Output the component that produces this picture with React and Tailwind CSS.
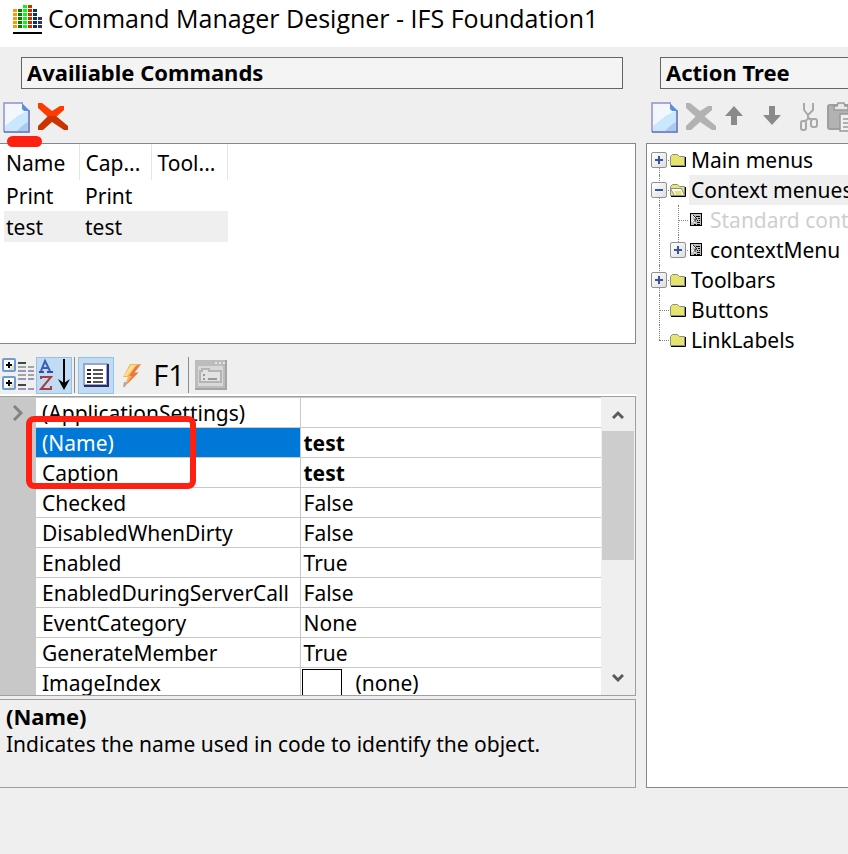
const PROPS = [
  ['(ApplicationSettings)', ''],
  ['(Name)', 'test'],
  ['Caption', 'test'],
  ['Checked', 'False'],
  ['DisabledWhenDirty', 'False'],
  ['Enabled', 'True'],
  ['EnabledDuringServerCall', 'False'],
  ['EventCategory', 'None'],
  ['GenerateMember', 'True'],
  ['ImageIndex', '(none)'],
];

const BARS = [
  ['#ff9900', 5],
  ['#008000', 5],
  ['#00ff00', 6],
  ['#cc3300', 6],
  ['#003366', 5],
  ['#333366', 3],
];

function Logo() {
  return (
    <svg width="29" height="30" viewBox="0 0 29 30" className="shrink-0" aria-hidden="true">
      {BARS.map(([color, n], i) =>
        Array.from({ length: n }, (_, j) => (
          <rect key={i + '-' + j} x={i * 5} y={21 - j * 4} width="4" height="3" fill={color} />
        ))
      )}
      <rect x="0" y="28" width="29" height="2" fill="#000" />
    </svg>
  );
}

function NewIcon() {
  return (
    <svg width="28" height="32" viewBox="0 0 28 32" aria-hidden="true">
      <path d="M1 1H20L26 8V30H1Z" fill="#f1f7fd" />
      <path d="M2 24L16 13L25 9V29H2Z" fill="#c9e7fd" />
      <path d="M14 29L19 24L25 20V29Z" fill="#a6cbf0" />
      <path d="M1 30V1H20" fill="none" stroke="#8f8fd0" strokeWidth="1.5" />
      <path d="M26 8V30H1" fill="none" stroke="#6464ae" strokeWidth="1.5" />
      <path d="M19 1L27 9H21L19 7Z" fill="#5a8fdb" />
    </svg>
  );
}

function CrossIcon({ top, bottom }) {
  return (
    <svg width="32" height="30" viewBox="0 0 32 30" aria-hidden="true">
      <path d="M1 1H5L15 9L23 4H27V8L19 15H11L1 6Z" fill={top} />
      <path d="M11 14H19L31 24V28H27L15 20L6 28H1V24Z" fill={bottom} />
    </svg>
  );
}

function ArrowIcon({ down }) {
  return (
    <svg width="18" height="19" viewBox="0 0 18 19" aria-hidden="true">
      <path d={down ? 'M6 0H12V9H18L9 19L0 9H6Z' : 'M9 0L18 10H12V19H6V10H0Z'} fill="#8a8a8a" />
    </svg>
  );
}

function CutIcon() {
  return (
    <svg width="20" height="30" viewBox="0 0 20 30" fill="none" stroke="#a8a8a8" strokeWidth="2" aria-hidden="true">
      <path d="M5 1V8L9 13V17L6 19M14 1V8L9 13M9 16L14 18" />
      <rect x="2" y="19" width="5" height="9" rx="2" />
      <rect x="12" y="17" width="6" height="8" rx="2" />
    </svg>
  );
}

function PasteIcon() {
  return (
    <svg width="28" height="30" viewBox="0 0 28 30" aria-hidden="true">
      <rect x="1" y="3" width="24" height="24" rx="2" fill="#b2b2b2" stroke="#9e9e9e" strokeWidth="2" />
      <path d="M7 8V4H10L11 1H17L18 4H21V8Z" fill="#e8e8e8" stroke="#999" strokeWidth="1.5" />
      <path d="M13 12H22L27 17V29H13Z" fill="#efefef" stroke="#999" strokeWidth="1.5" />
      <path d="M16 17H21M16 21H24M16 25H24" stroke="#999" strokeWidth="1.5" />
    </svg>
  );
}

function CategorizedIcon() {
  return (
    <svg width="32" height="34" viewBox="0 0 32 34" aria-hidden="true">
      {[1, 19].map((y) => (
        <g key={y}>
          <rect x="1" y={y} width="12" height="12" rx="1" fill="#fff" stroke="#6f9cd4" strokeWidth="2" />
          <path d={`M12 ${y + 5}V${y + 11}H6Z`} fill="#e4e0d0" />
          <path d={`M4 ${y + 6}H10M7 ${y + 3}V${y + 9}`} stroke="#000" strokeWidth="2" />
        </g>
      ))}
      <path d="M16 5H24M16 27H24" stroke="#444" strokeWidth="2" />
      {[9, 13, 17, 21, 31].map((y) => (
        <path key={y} d={`M16 ${y}H24M26 ${y}H32`} stroke={y % 8 === 1 ? '#9aa89f' : '#9c94bc'} strokeWidth="2" />
      ))}
    </svg>
  );
}

function SortIcon() {
  return (
    <svg width="32" height="34" viewBox="0 0 32 34" fill="none" aria-hidden="true">
      <path d="M3 13L7 3L12 13M5 10H10" stroke="#3c5cb8" strokeWidth="2" />
      <path d="M1 14H6M9 14H15" stroke="#3c4c9c" strokeWidth="2" />
      <path d="M3 21V19H13L3 31H13V28" stroke="#a83c3c" strokeWidth="2" />
      <path d="M26 1V29" stroke="#000" strokeWidth="2" />
      <path d="M20 21L26 32L32 21L26 25Z" fill="#000" />
    </svg>
  );
}

function PropertiesIcon() {
  return (
    <svg width="26" height="24" viewBox="0 0 26 24" aria-hidden="true">
      <rect x="1" y="1" width="23" height="21" fill="#fff" stroke="#9aa4d0" strokeWidth="2" />
      <path d="M25 1V23H1" fill="none" stroke="#2c2c68" strokeWidth="2" />
      <path d="M4 7H8M4 11H8M4 15H8M4 19H8" stroke="#222" strokeWidth="2" />
      <path d="M10 7H20M10 11H20M10 15H20M10 19H20" stroke="#555" strokeWidth="2" />
    </svg>
  );
}

function BoltIcon() {
  return (
    <svg width="20" height="25" viewBox="0 0 20 25" aria-hidden="true">
      <path d="M8 1H19L13 9H17L2 24L6 14H1Z" fill="#f4b45c" />
      <path d="M19 1L12 10H16L4 22L10 13H7L14 3Z" fill="#e87848" />
      <path d="M9 2H14L5 13H2Z" fill="#ffe08c" />
      <path d="M1 24L2 19H5L3 24Z" fill="#aaa" />
    </svg>
  );
}

function PagesIcon() {
  return (
    <svg width="32" height="30" viewBox="0 0 32 30" aria-hidden="true">
      <rect width="32" height="30" fill="#bcbcbc" />
      <path d="M31 0V29H0" fill="none" stroke="#a4a4a4" strokeWidth="2" />
      <rect x="3" y="6" width="25" height="20" fill="#d8d8d8" />
      <path d="M5 22V11H7V9H14V11H26V22Z" fill="#e2e2e2" stroke="#b4b4b4" strokeWidth="2" />
      <path d="M8 15H10M8 19H10M13 19H22" stroke="#989898" strokeWidth="2" />
      <path d="M20 3H22M24 3H26M28 3H30" stroke="#e4e4e4" strokeWidth="2" />
    </svg>
  );
}

function FolderIcon({ open }) {
  return (
    <svg width="16" height="14" viewBox="0 0 16 14" aria-hidden="true">
      <defs>
        <pattern id="dither" width="2" height="2" patternUnits="userSpaceOnUse">
          <rect width="2" height="2" fill="#d6d6d6" />
          <rect width="1" height="1" fill="#f4f400" />
          <rect x="1" y="1" width="1" height="1" fill="#f4f400" />
        </pattern>
      </defs>
      <path d="M0.5 12.5V3.5L2.5 1.5H7.5L9.5 3.5H14.5V12.5Z" fill="url(#dither)" stroke="#8c8c8c" />
      {open && <path d="M0.5 5.5H11.5L14.5 12.5H4.5Z" fill="#fff" stroke="#8c8c8c" />}
      {open && <path d="M4 8H11L12 12H6Z" fill="url(#dither)" />}
      <path d="M1 13.5H15.5V4" fill="none" stroke="#000" />
    </svg>
  );
}

function MenuIcon() {
  return (
    <svg width="13" height="14" viewBox="0 0 13 14" aria-hidden="true">
      <rect x="0.5" y="0.5" width="11" height="12" fill="#c0c0c0" stroke="#000" />
      <path d="M2 2V9L4 7L5 10M2 2L6 6" fill="none" stroke="#fff" />
      <path d="M3 2L7 6H5V9" fill="none" stroke="#222" />
      <path d="M6 3.5H10M8 5.5H10M7 7.5H8M9 7.5H10M7 9.5H10M4 11.5H6M7 11.5H10" stroke="#000" />
    </svg>
  );
}

function Toggle({ open, label }) {
  return (
    <button
      type="button"
      aria-label={label}
      aria-expanded={open}
      className="flex size-4 shrink-0 items-center justify-center rounded-xs border border-[#919191] bg-linear-to-br from-white to-[#dedede]"
    >
      <svg width="8" height="8" viewBox="0 0 8 8" aria-hidden="true">
        <path d={open ? 'M0 4H8' : 'M0 4H8M4 0V8'} stroke="#3a539f" strokeWidth="2" />
      </svg>
    </button>
  );
}

function TreeRow({ toggle, open, icon, label, nested, selected, muted, first, last }) {
  const line = first ? 'h-[15px] self-end' : last ? 'h-[15px] self-start' : 'h-full';
  return (
    <li className="flex h-[30px] items-stretch">
      {nested && <span className="ml-2 w-[11px] shrink-0 border-l border-dotted border-[#808080]" />}
      <span className="grid w-[18px] shrink-0 items-center">
        <span className={'col-start-1 row-start-1 ml-2 border-l border-dotted border-[#808080] ' + line} />
        <span className="col-start-1 row-start-1 ml-2 border-t border-dotted border-[#808080]" />
        {toggle && (
          <span className="col-start-1 row-start-1">
            <Toggle open={open} label={'Toggle ' + label} />
          </span>
        )}
      </span>
      <span className={'flex w-5 shrink-0 items-center ' + (nested ? 'pl-0.5' : 'pl-px')}>{icon}</span>
      <span className={'flex items-center pl-0.5 whitespace-nowrap ' + (selected ? 'bg-[#efefef] ' : '') + (muted ? 'text-[#cfcfcf]' : '')}>
        {label}
      </span>
    </li>
  );
}

function ToolButton({ label, active, children }) {
  return (
    <button
      type="button"
      aria-label={label}
      className={'flex h-[37px] w-9 shrink-0 items-center justify-center border ' + (active ? 'border-[#92c3ee] bg-[#c1dbf3]' : 'border-transparent')}
    >
      {children}
    </button>
  );
}

function Chevron({ d }) {
  return (
    <svg width="12" height="9" viewBox="0 0 12 9" fill="none" stroke="#5a5a5a" strokeWidth="3" aria-hidden="true">
      <path d={d} />
    </svg>
  );
}

export default function App() {
  return (
    <div className="flex min-h-screen flex-col overflow-hidden bg-[#efefef] font-['Noto_Sans',sans-serif] text-[21px] leading-[30px] text-black">
      <header className="flex h-[47px] items-start gap-1.5 bg-white pt-1 pl-[13px]">
        <Logo />
        <h1 className="font-['Open_Sans',sans-serif] text-[25px] leading-7 whitespace-nowrap">
          Command Manager Designer - IFS Foundation1
        </h1>
      </header>

      <main className="flex gap-2.5 pt-2.5">
        <section className="min-w-0 flex-[0_0_75%]">
          <h2 className="mr-[13px] ml-[21px] h-8 border border-[#646464] bg-[#f4f4f4] pl-[5px] text-[22px] leading-7 font-bold">
            Availiable Commands
          </h2>
          <div className="relative flex h-[54px] items-start gap-1.5 pt-[13px] pl-[3px]">
            <button type="button" aria-label="New command"><NewIcon /></button>
            <button type="button" aria-label="Delete command"><CrossIcon top="#ff3a00" bottom="#cc3300" /></button>
            <span className="absolute top-[47px] left-[7px] z-10 h-[11px] w-[35px] rounded-full bg-[#ff2012]" />
          </div>

          <div className="h-[201px] border border-l-0 border-[#828790] bg-white pl-1">
            <table className="w-56 table-fixed border-collapse text-left">
              <thead>
                <tr className="h-9">
                  <th className="w-[75px] border-r border-[#e5e5e5] pt-0.5 pl-0.5 font-normal">Name</th>
                  <th className="w-[72px] border-r border-[#e5e5e5] pt-0.5 pl-1.5 font-normal">Cap...</th>
                  <th className="border-r border-[#e5e5e5] pt-0.5 pl-1.5 font-normal">Tool...</th>
                </tr>
              </thead>
              <tbody>
                <tr className="h-[31px]">
                  <td className="pl-0.5">Print</td>
                  <td className="pl-1.5">Print</td>
                  <td />
                </tr>
                <tr className="h-[31px] bg-[#efefef]">
                  <td className="pl-0.5">test</td>
                  <td className="pl-1.5">test</td>
                  <td />
                </tr>
              </tbody>
            </table>
          </div>

          <div className="flex h-[52px] items-center border-b-2 border-white pt-3">
            <ToolButton label="Categorized"><CategorizedIcon /></ToolButton>
            <ToolButton label="Alphabetical" active><SortIcon /></ToolButton>
            <span className="mx-0.5 h-9 w-px bg-[#8c8c8c]" />
            <span className="w-px" />
            <ToolButton label="Properties" active><PropertiesIcon /></ToolButton>
            <ToolButton label="Events"><BoltIcon /></ToolButton>
            <button type="button" className="w-[38px] font-['Open_Sans',sans-serif] text-[29px]">F1</button>
            <span className="mr-1 h-9 w-px bg-[#8c8c8c]" />
            <ToolButton label="Property pages"><PagesIcon /></ToolButton>
          </div>

          <div className="relative flex h-[300px] border border-l-0 border-[#a0a0a0] bg-white">
            <div className="flex w-9 shrink-0 justify-center bg-[#c8c8c8] pt-2">
              <svg width="12" height="16" viewBox="0 0 12 16" fill="none" stroke="#828282" strokeWidth="3" aria-hidden="true">
                <path d="M2 1L9 8L2 15" />
              </svg>
            </div>
            <div className="min-w-0 grow overflow-hidden">
              <table className="w-full table-fixed border-collapse">
                <tbody>
                  {PROPS.map(([name, value], i) => (
                    <tr key={name} className="h-[30px]">
                      <td className={'w-[264px] border border-l-0 border-[#c8c8c8] pl-1.5 leading-7 ' + (i === 1 ? 'bg-[#0078d7] text-white' : '')}>
                        <span className="block pt-px">{name}</span>
                      </td>
                      <td className={'border-y border-[#c8c8c8] pl-[3px] leading-7 ' + (i === 1 || i === 2 ? 'font-bold' : '')}>
                        {name === 'ImageIndex' ? (
                          <span className="flex h-[29px] gap-3.5">
                            <span className="mt-px -ml-0.5 h-[30px] w-10 border border-black" />
                            <span className="pt-px">{value}</span>
                          </span>
                        ) : (
                          <span className="block pt-px">{value}</span>
                        )}
                      </td>
                    </tr>
                  ))}
                </tbody>
              </table>
            </div>
            <div className="flex w-[34px] shrink-0 flex-col items-center border-r border-l border-[#efefef] bg-[#efefef]">
              <button type="button" aria-label="Scroll up" className="flex h-[34px] shrink-0 items-center"><Chevron d="M1 8L6 3L11 8" /></button>
              <span className="h-[129px] w-full bg-[#cdcdcd]" />
              <button type="button" aria-label="Scroll down" className="mt-auto flex h-[34px] items-center"><Chevron d="M1 1L6 6L11 1" /></button>
            </div>
            <span className="absolute top-[19px] left-[26px] h-[73px] w-[170px] rounded-lg border-6 border-[#ff2012]" />
          </div>

          <div className="mt-[3px] h-[89px] border border-l-0 border-[#a0a0a0] pt-0.5 pl-1.5 leading-[29px]">
            <h3 className="text-[22px] leading-7 font-bold">(Name)</h3>
            <p className="whitespace-nowrap">Indicates the name used in code to identify the object.</p>
          </div>
        </section>

        <section className="flex min-w-0 grow flex-col">
          <h2 className="ml-3.5 h-8 border border-r-0 border-[#646464] bg-[#f4f4f4] pl-[5px] text-[22px] leading-7 font-bold">Action Tree</h2>
          <div className="flex h-[54px] items-start overflow-hidden pt-[13px] pl-[5px]">
            <button type="button" aria-label="New action" className="mr-1.5 shrink-0"><NewIcon /></button>
            <button type="button" aria-label="Delete action" className="mr-2 shrink-0"><CrossIcon top="#b2b2b2" bottom="#b2b2b2" /></button>
            <button type="button" aria-label="Move up" className="mt-1 mr-5 shrink-0"><ArrowIcon /></button>
            <button type="button" aria-label="Move down" className="mt-1 mr-[18px] shrink-0"><ArrowIcon down /></button>
            <button type="button" aria-label="Cut" className="mr-2 shrink-0"><CutIcon /></button>
            <button type="button" aria-label="Paste" className="shrink-0"><PasteIcon /></button>
          </div>
          <ul className="grow overflow-hidden border border-r-0 border-[#828790] bg-white pt-px pl-1">
            <TreeRow first toggle icon={<FolderIcon />} label="Main menus" />
            <TreeRow toggle open selected icon={<FolderIcon open />} label="Context menues" />
            <TreeRow nested muted icon={<MenuIcon />} label="Standard context menu" />
            <TreeRow nested toggle last icon={<MenuIcon />} label="contextMenu" />
            <TreeRow toggle icon={<FolderIcon />} label="Toolbars" />
            <TreeRow icon={<FolderIcon />} label="Buttons" />
            <TreeRow last icon={<FolderIcon />} label="LinkLabels" />
          </ul>
        </section>
      </main>
    </div>
  );
}
